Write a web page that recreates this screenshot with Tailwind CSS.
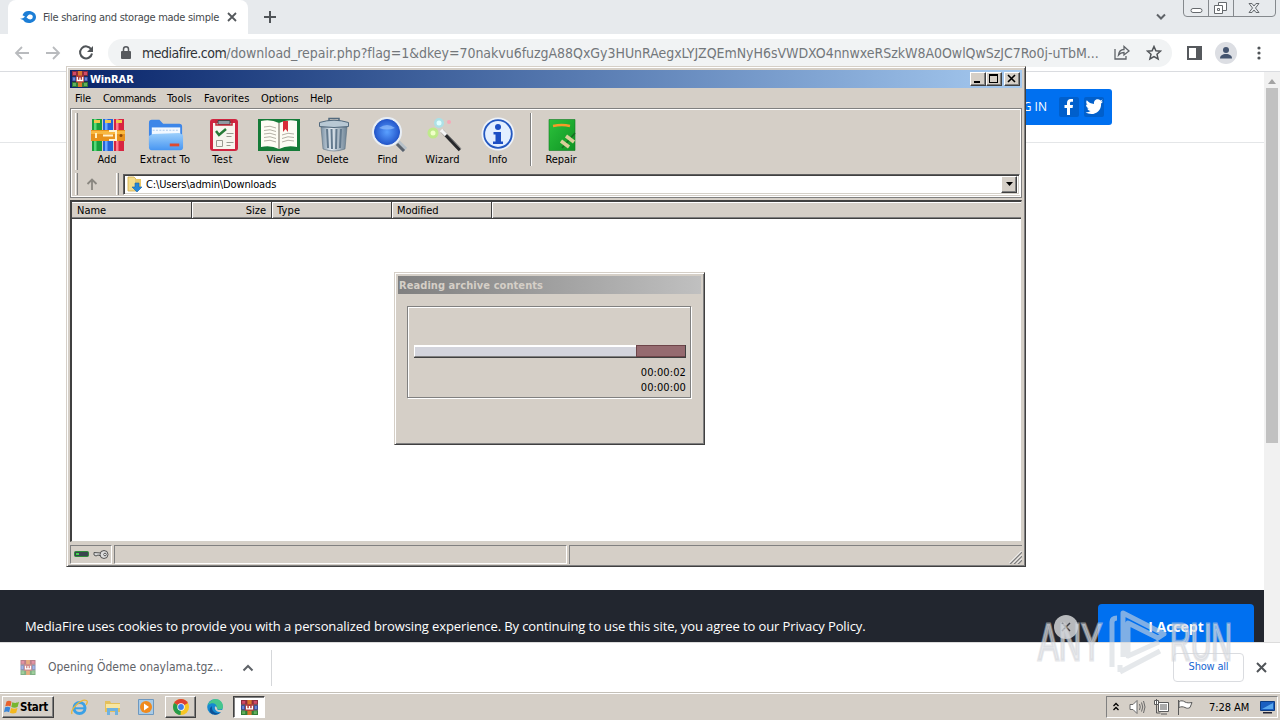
<!DOCTYPE html>
<html lang="en">
<head>
<meta charset="utf-8">
<title>Desktop</title>
<script src="https://cdn.jsdelivr.net/npm/@tailwindcss/browser@4"></script>
</head>
<body class="relative w-[1280px] h-[720px] overflow-hidden bg-white text-black font-['DejaVu_Sans_Condensed','DejaVu_Sans',sans-serif] text-[11px] leading-[14px] whitespace-nowrap">
<svg width="0" height="0" class="absolute">
  <defs>
    <symbol id="rar" viewBox="0 0 16 16">
      <path fill="#8c2c3c" d="M0 0h16v5H0z"/><path fill="#344a9c" d="M0 5.500h16v5H0z"/><path fill="#2f7d35" d="M0 11h16v5H0z"/>
      <path stroke="#222" stroke-width=".6" d="M0 5.200h16M0 10.700h16"/>
      <path fill="#d24a68" d="M1 1h3v3H1zM12 1h3v3h-3z"/><path fill="#6d86d6" d="M1 6.500h2v3H1zM13 6.500h2v3h-2z"/><path fill="#62b05c" d="M1 12h3v3H1zM12 12h3v3h-3z"/>
      <path fill="#d8772c" d="M6 0h4v16H6z"/><path fill="#b23a3a" d="M4 4.500h8v7H4z"/><path fill="none" stroke="#fff" stroke-width="1.300" d="M5.300 6v3.500h5.400V6M8 6.500v3"/>
    </symbol>
    <linearGradient id="fold" x1="0" y1="0" x2="0" y2="1"><stop offset="0" stop-color="#9ccffb"/><stop offset="1" stop-color="#4896f2"/></linearGradient>
    <linearGradient id="metal" x1="0" y1="0" x2="1" y2="0"><stop offset="0" stop-color="#7b91a4"/><stop offset=".4" stop-color="#e2eaf1"/><stop offset="1" stop-color="#6c8294"/></linearGradient>
    <radialGradient id="lens" cx=".5" cy=".5" r=".5"><stop offset="0" stop-color="#5aa0ff"/><stop offset="1" stop-color="#2458cc"/></radialGradient>
    <linearGradient id="grn" x1="0" y1="0" x2="1" y2="1"><stop offset="0" stop-color="#2cc23c"/><stop offset="1" stop-color="#0f9424"/></linearGradient>
  </defs>
</svg>

<div class="flex flex-col h-full">
  <!-- tab strip -->
  <div class="flex h-[34px] bg-[#e7eaed] pl-2">
    <div class="flex items-center w-[240px] h-full bg-white rounded-t-lg pl-3 text-[#45494d]">
      <svg width="16" height="14" viewBox="0 0 16 14"><path fill="#1c7ed6" d="M8.500 1C12.800 1 16 3.500 16 7s-3.200 6-7 6c-3 0-4.800-1.300-5.800-3L0 8.800C3 8.600 4 7.500 5 6.500L2.500 5.300C3.500 2.500 5.500 1 8.500 1z"/><path fill="#fff" d="M6.500 7.500C8 5 9 4.500 10.300 4.500a2.500 2.500 0 010 5C9 9.500 8 8.500 6.500 7.500z"/></svg>
      <span class="ml-[7px] pt-px text-[11px] tracking-[-0.28px]">File sharing and storage made simple</span>
      <svg class="ml-auto mr-[11px]" width="10" height="10" stroke="#54585c" stroke-width="1.8"><path d="M1 1l8 8M9 1l-8 8"/></svg>
    </div>
    <svg class="ml-[15px] mt-[10px]" width="14" height="14" stroke="#505458" stroke-width="2"><path d="M7 1v12M1 7h12"/></svg>
    <svg class="ml-auto mt-[13px]" width="12" height="8" fill="none" stroke="#5f6368" stroke-width="2"><path d="M2 1.500l4 4 4-4"/></svg>
    <svg class="ml-4 mr-1" width="93" height="18" fill="none" stroke="#85898d"><path d="M.5 0v13q0 3.500 3.500 3.500h85q3.500 0 3.500-3.500V0M25.500 0v16M50.500 0v16"/><g stroke="#666a6e"><rect x="8" y="8.500" width="11" height="4" rx="2" fill="#fff"/><path fill="#fff" d="M35.500 2.500h8v8h-8z"/><path fill="#fff" d="M31.500 5.500h8v8h-8z"/><path d="M34.500 8.500h2v2h-2zM66 3.500h3l2 2.500 2-2.500h3l-3.500 4.500 3.500 4.500h-3L71 10l-2 2.500h-3L69.500 8z"/></g></svg>
  </div>
  <!-- address toolbar -->
  <div class="flex items-center h-[38px] bg-white border-b border-[#dadce0] pl-[14px]">
    <svg width="16" height="14" fill="none" stroke="#b9bbbe" stroke-width="1.800"><path d="M15 7H2M8 1L2 7l6 6"/></svg>
    <svg class="ml-4" width="16" height="14" fill="none" stroke="#b9bbbe" stroke-width="1.800"><path d="M0 7h13M7 1l6 6-6 6"/></svg>
    <svg class="ml-4" width="16" height="16" fill="none" stroke="#505458" stroke-width="2"><path d="M13.200 4.200A6 6 0 1014 8.500"/><path fill="#505458" stroke="none" d="M15 1v6H9z"/></svg>
    <div class="flex items-center ml-[14px] w-[1064px] h-7 rounded-full bg-[#f1f3f4] pl-[13px]">
      <svg width="10" height="13" viewBox="0 0 10 13"><path fill="#56595d" d="M1 5h8q1 0 1 1v6q0 1-1 1H1q-1 0-1-1V6q0-1 1-1z"/><path fill="none" stroke="#56595d" stroke-width="1.500" d="M2.500 5.500V3.300a2.500 2.500 0 015 0v2.200"/></svg>
      <span class="ml-[11px] w-[960px] text-[14px] leading-5 text-[#73777b] tracking-[-0.035px]"><span class="text-[#303338] tracking-[-0.5px]">mediafire.com</span>/download_repair.php?flag=1&amp;dkey=70nakvu6fuzgA88QxGy3HUnRAegxLYJZQEmNyH6sVWDXO4nnwxeRSzkW8A0OwlQwSzJC7Ro0j-uTbM...</span>
      <svg class="ml-3" width="16" height="15" fill="none" stroke="#5f6368" stroke-width="1.300"><path d="M1 4v10h11v-3M4.500 10c.5-4 2.500-5.500 5.500-5.500V1.500L15 6l-5 4V7.500c-2.500 0-4 .5-5.500 2.500z"/></svg>
      <svg class="ml-4" width="16" height="16" viewBox="0 0 16 16" fill="none" stroke="#505458" stroke-width="1.500"><path d="M8 1.500l1.900 4.300 4.600.4-3.500 3.100 1.100 4.600L8 11.500l-4.100 2.400L5 9.300 1.500 6.200l4.600-.4z"/></svg>
    </div>
    <svg class="ml-[15px]" width="15" height="14"><path fill="none" stroke="#56595d" stroke-width="2" d="M1 1h13v12H1z"/><path fill="#56595d" d="M9 0h6v14H9z"/></svg>
    <svg class="ml-[13px]" width="22" height="22"><circle cx="11" cy="11" r="11" fill="#dcdee3"/><circle cx="11" cy="8" r="3" fill="#44546f"/><path fill="#44546f" d="M5 16.500c0-3 2.500-4.500 6-4.500s6 1.500 6 4.500z"/></svg>
    <svg class="ml-5" width="4" height="14" fill="#505458"><circle cx="2" cy="2" r="1.600"/><circle cx="2" cy="7" r="1.600"/><circle cx="2" cy="12" r="1.600"/></svg>
  </div>
  <!-- web page -->
  <div class="flex h-[570px]">
    <div class="flex flex-col w-[1264px]">
      <div class="flex justify-end h-[71px] pr-[152px] pt-[17px] border-b border-[#e4e6e8]">
        <div class="flex items-center w-[130px] h-9 rounded-[3px] bg-[#0070f0] text-white pr-2 justify-end font-['Open_Sans',sans-serif]">
          <span class="text-[12px]">LOG IN</span>
          <svg class="ml-3" width="20" height="20"><rect width="20" height="20" rx="2" fill="#005fcc"/><path fill="#fff" d="M8 18v-7H5.500V8H8V6c0-2.800 1.500-4 3.800-4H14v2.800h-1.500c-1.200 0-1.500.6-1.500 1.600V8h3l-.4 3H11v7z"/></svg>
          <svg class="ml-[5px]" width="20" height="20"><rect width="20" height="20" rx="2" fill="#005fcc"/><path fill="#fff" d="M19 4.800l-1.900 1.600c.4 6.600-4.600 10.600-9.600 10.600-2.300 0-4.300-.6-5.900-1.700 1.900.1 3.600-.4 5-1.400-1.700-.2-2.800-1.200-3.300-2.500h1.500C3 10.800 2 9.500 2 7.600l1.600.4C2.200 6.800 1.800 4.900 2.800 3.200c2 2.300 4.300 3.500 7.200 3.700-.5-2.900 1.500-4.700 3.700-4.700 1.100 0 2 .4 2.700 1.200l2.300-.9-1.500 2z"/></svg>
        </div>
      </div>
      <div class="flex items-start mt-auto h-[52px] bg-[#22262f] text-white font-['Open_Sans',sans-serif]">
        <span class="ml-[25px] mt-[27px] text-[13px] leading-[18px] tracking-[-0.11px]">MediaFire uses cookies to provide you with a personalized browsing experience. By continuing to use this site, you agree to our Privacy Policy.</span>
        <svg class="ml-auto mt-[25px]" width="24" height="24"><circle cx="12" cy="12" r="12" fill="#b7b9bc"/><path stroke="#3a3e46" stroke-width="1.500" d="M8 8l8 8M16 8l-8 8"/></svg>
        <div class="flex justify-center ml-5 mr-[10px] mt-[14px] w-[156px] h-[38px] rounded-t bg-[#0070f0] pt-[13px] text-[14px] leading-5 font-bold">I Accept</div>
      </div>
    </div>
    <div class="flex flex-col items-center w-4 bg-[#f1f1f1] pt-[7px]">
      <svg width="8" height="5"><path fill="#a3a3a3" d="M4 0l4 5H0z"/></svg>
      <div class="mt-[4px] w-3 h-[355px] bg-[#c1c1c1]"></div>
    </div>
  </div>
  <!-- downloads bar -->
  <div class="flex items-center h-[50px] bg-white border-t border-[#dcdcdc]">
    <svg class="ml-5 opacity-60" width="16" height="15"><use href="#rar"/></svg>
    <span class="ml-3 w-[176px] pb-[2px] text-[12px] text-[#5f6368]">Opening Ödeme onaylama.tgz...</span>
    <svg class="ml-[18px]" width="12" height="8" fill="none" stroke="#5f6368" stroke-width="2"><path d="M1.500 6.500l4.500-4.500 4.500 4.500"/></svg>
    <div class="ml-[17px] w-px h-9 bg-[#d5d7da]"></div>
    <div class="flex items-center justify-center ml-auto pb-[2px] w-[71px] h-[29px] rounded border border-[#dadce0] text-[#1967d2] tracking-[-0.2px]">Show all</div>
    <svg class="ml-[12px] mr-[13px]" width="11" height="11" stroke="#505458" stroke-width="2"><path d="M1 1l9 9M10 1l-9 9"/></svg>
  </div>
  <!-- taskbar -->
  <div class="flex items-center h-[28px] bg-[#d5cfc7] border-t border-[#c4c0b8] shadow-[inset_0_1px_0_#fff] pt-px pl-[2px]">
    <div class="flex items-center w-[52px] h-[22px] border border-t-white border-l-white border-r-[#404040] border-b-[#404040] shadow-[inset_-1px_-1px_0_#808080] font-bold text-[11.500px] tracking-[-0.3px]">
      <svg class="ml-px" width="16" height="16"><path fill="#e8622c" d="M2.500 2.500c2-1 3.500-.8 5 .2L6.500 7.500C5 6.500 3.500 6.500 1.300 7.300z"/><path fill="#77b62e" d="M8.300 3.200c2 1 4 1.200 6.700-.4l-1.300 5c-2 1.200-4.500 1-6.400.1z"/><path fill="#3a86d8" d="M1.100 8.300c2-.9 3.600-.8 5.200.2L5.100 13.300c-1.500-1-3-1-5.100-.1z"/><path fill="#f4b81e" d="M7.100 9c2 .9 4 1 6.400-.1l-1.300 4.800c-2.300 1.100-4.400 1-6.300 0z"/></svg>
      <span>Start</span>
    </div>
    <svg class="ml-[17px]" width="17" height="17"><circle cx="8.500" cy="9" r="5.500" fill="none" stroke="#3ba1e6" stroke-width="3"/><path fill="none" stroke="#3ba1e6" stroke-width="2" d="M4 9.300h10"/><path fill="none" stroke="#e9b73b" stroke-width="1.300" d="M1 15C-1 11 10-1 15.500 1.500c1.500.8.500 3-.5 4.500"/></svg>
    <svg class="ml-4" width="17" height="16"><path fill="#e4c05c" d="M1 2h5l1 2h9v9H1z"/><path fill="#f8e6a0" d="M2 5h14v4H2z"/><path fill="#6fb2e0" d="M3 9h11v7h-3v-4H6v4H3z"/></svg>
    <svg class="ml-[17px]" width="16" height="16"><path fill="#a9cbe6" stroke="#6d98c0" d="M.5.5h15v15H.5z"/><circle cx="8" cy="8" r="6" fill="#f08a1d"/><path fill="#fff" d="M6 4.500l5 3.500-5 3.500z"/></svg>
    <div class="flex items-center justify-center ml-[11px] w-[31px] h-[22px] border border-t-white border-l-white border-r-[#404040] border-b-[#404040] shadow-[inset_-1px_-1px_0_#808080]">
      <svg width="16" height="16"><circle cx="8" cy="8" r="8" fill="#f7c623"/><path fill="#dd4132" d="M8 8L1.100 4A8 8 0 0114.900 4z"/><path fill="#259b4b" d="M8 8v0l-.5 8A8 8 0 011.100 4z"/><circle cx="8" cy="8" r="3.700" fill="#fff"/><circle cx="8" cy="8" r="2.900" fill="#3d7ee8"/></svg>
    </div>
    <svg class="ml-[11px]" width="16" height="16"><circle cx="8" cy="8" r="7.800" fill="#1589d1"/><path fill="#45c68d" d="M5 1c6-3 12 2 10.800 8-1 2-5 2-5.800 0C10 4 5 3 1 6c.5-2 2-4 4-5z"/><path fill="#0d5298" d="M5 7c-1 6 5 9 9 6-3 4-13 4-11-4z"/><path fill="#d5cfc7" d="M8 7.500c2.500 0 1.500 2 3 3.500h5l-1 2c-4 1-8-2-7-5.500z"/></svg>
    <div class="flex items-center justify-center ml-[10px] w-[32px] h-[22px] bg-white border border-[#404040] border-r-white border-b-white shadow-[inset_1px_1px_0_#808080]">
      <svg width="17" height="15" viewBox="0 0 16 16" preserveAspectRatio="none"><use href="#rar"/></svg>
    </div>
    <div class="flex items-center ml-auto mr-[2px] w-[172px] h-[22px] border border-[#808080] border-r-white border-b-white pl-[6px]">
      <svg width="6" height="10" fill="none" stroke="#000" stroke-width="1.300"><path d="M.5 4L3 1.500 5.500 4M.5 8L3 5.500 5.500 8"/></svg>
      <svg class="ml-[10px]" width="17" height="16" fill="none" stroke="#6a6a6a"><path fill="#fff" d="M1 5.500h3l4-4v13l-4-4H1z"/><path d="M10.500 5q1.500 3 0 6M12.500 3.500q2.500 4.500 0 9M14.500 2q3 6 0 12"/></svg>
      <svg class="ml-[7px]" width="16" height="16" fill="none" stroke="#5a5a5a"><path fill="#fff" d="M5.500 3.500h10v9h-10z"/><path fill="#aaa" stroke="none" d="M7 5h7v6H7z"/><path fill="#fff" d="M1.500 1.500h4v4h-4zM3.500 0v5"/><path d="M3.500 6v8h4M8 15h6"/></svg>
      <svg class="ml-[8px]" width="16" height="16" fill="#fff" stroke="#5a5a5a"><path d="M1.500 1v15M2 2.500c2-1 4-1 6 .5 2 1 4 1 7 .5l-2 5c-2 1-3 1-5 0-2-1-4-1-6 0z"/></svg>
      <span class="ml-[16px] pt-px tracking-[-0.05px]">7:28 AM</span>
      <svg class="ml-auto mr-[2px]" width="15" height="14"><path fill="#1b5fc0" stroke="#0d3c82" d="M.5 1.500h14v9H.5z"/><path fill="#59a7ec" d="M2 9l11-6v6z"/><path fill="#223" d="M3 12h9v1.500H3z"/></svg>
    </div>
  </div>
</div>

<!-- WinRAR window -->
<div class="absolute left-[66px] top-[66px] w-[960px] h-[501px] flex flex-col bg-[#d5cfc7] border border-t-[#d5cfc7] border-l-[#d5cfc7] border-r-[#404040] border-b-[#404040] shadow-[inset_1px_1px_0_#fff,inset_-1px_-1px_0_#808080] p-[3px]">
  <div class="flex items-center h-[18px] shrink-0 bg-linear-to-r from-[#0a246a] to-[#a6caf0] pl-[2px] pr-[2px]">
    <svg width="16" height="16"><use href="#rar"/></svg>
    <span class="ml-[2px] pt-px text-white font-bold tracking-[-0.1px]">WinRAR</span>
    <div class="flex items-center ml-auto">
      <div class="w-4 h-[14px] bg-[#d5cfc7] border border-t-white border-l-white border-r-[#404040] border-b-[#404040] shadow-[inset_-1px_-1px_0_#808080]"><svg width="14" height="12"><path fill="#000" d="M3 8h6v2H3z"/></svg></div>
      <div class="w-4 h-[14px] bg-[#d5cfc7] border border-t-white border-l-white border-r-[#404040] border-b-[#404040] shadow-[inset_-1px_-1px_0_#808080]"><svg width="14" height="12"><path fill="#000" d="M2 1h9v9H2zM3 3v6h7V3z" fill-rule="evenodd"/></svg></div>
      <div class="ml-[2px] w-4 h-[14px] bg-[#d5cfc7] border border-t-white border-l-white border-r-[#404040] border-b-[#404040] shadow-[inset_-1px_-1px_0_#808080]"><svg width="14" height="12"><path stroke="#000" stroke-width="1.600" d="M3 2l7 7M10 2l-7 7"/></svg></div>
    </div>
  </div>
  <div class="flex items-center h-[20px] shrink-0 pl-[5px] pt-px tracking-[-0.1px]">
    <span class="w-[28px]">File</span><span class="w-[64px] tracking-[-0.4px]">Commands</span><span class="w-[37px] tracking-[0.1px]">Tools</span><span class="w-[57px] tracking-[0.1px]">Favorites</span><span class="w-[49px]">Options</span><span>Help</span>
  </div>
  <!-- toolbars -->
  <div class="flex flex-col h-[90px] shrink-0 border border-[#808080] shadow-[inset_1px_1px_0_#fff,inset_-1px_-1px_0_#fff]">
    <div class="flex h-[62px] pt-[4px] pl-[4px] tracking-[-0.1px]">
      <div class="w-[3px] h-[57px] border-l border-l-white border-r border-r-[#808080]"></div>
      <div class="flex flex-col items-center w-[58px] pt-[4px]">
        <svg class="ml-[2px]" width="36" height="36"><path fill="#18a03c" d="M2 2h10v32H2z"/><path fill="#56d978" d="M4 2h2.500v32H4z"/><path fill="#2464d8" d="M13 2h10v32H13z"/><path fill="#6aa8ff" d="M15 2h2.500v32H15z"/><path fill="#d82440" d="M24 2h10v32H24z"/><path fill="#ff7c8c" d="M26 2h2.500v32H26z"/><path fill="#f2c84b" d="M4 3h6v3H4zM15 3h6v3h-6zM26 3h6v3h-6z"/><path fill="#e8921c" d="M1 13h34v11H1z"/><path fill="#f9b840" d="M1 14h34v3H1z"/><path fill="none" stroke="#fff3d0" stroke-width="2" d="M19 14h7v9h-7M13 18.500h10"/><path fill="#fff0c0" d="M5 16h2v5H5z"/><circle cx="31" cy="18.500" r="1.500" fill="#8e4a08"/></svg>
        <span>Add</span>
      </div>
      <div class="flex flex-col items-center w-[58px] pt-[4px]">
        <svg class="ml-[2px]" width="36" height="36" viewBox="0 0 38 36"><path fill="#3d86e8" d="M1 5q0-3 3-3h8l4 4h17q3 0 3 3v20H1z"/><path fill="#f2f8ff" d="M4 10h30v12H4z"/><path stroke="#a8c8ec" stroke-dasharray="2 1.500" d="M5 13h28"/><path fill="url(#fold)" d="M1 19l4-2 28-1 4 2v13q0 3-3 3H4q-3 0-3-3z"/><path fill="#e04a30" d="M23 27h10v3H23z"/></svg>
        <span class="tracking-[0.15px]">Extract To</span>
      </div>
      <div class="flex flex-col items-center w-[57px] pt-[4px]">
        <svg class="ml-[2px]" width="30" height="36"><rect x="1" y="2" width="28" height="32" rx="3" fill="#d02540"/><path fill="#f7f5ee" d="M4 6h22v26H4z"/><path fill="#8f9aa2" stroke="#444" d="M9 3.500h12v4H9z"/><path fill="none" stroke="#c02434" stroke-width="1.500" d="M7 3v5h16V3"/><path fill="none" stroke="#277a37" stroke-width="2.500" d="M7 14l3 4 7-6"/><path fill="none" stroke="#9a9a90" d="M17.500 16.500h7M17.500 19.500h5M17.500 25.500h7M17.500 28.500h4M7.500 23.500h6v6h-6z"/></svg>
        <span class="tracking-[0.3px]">Test</span>
      </div>
      <div class="flex flex-col items-center w-[54px] pt-[4px]">
        <svg class="ml-[2px]" width="42" height="36"><path fill="#157b38" d="M0 2h42v32H0z"/><path fill="#fdfcf4" d="M3 4q10-2 18 2 8-4 18-2v26q-10-2-18 2-8-4-18-2z"/><path stroke="#9a968a" stroke-width="1.500" d="M21 6v26"/><path fill="none" stroke="#b4b1a6" d="M6 10q6-2 12 1M6 13.500q6-2 12 1M6 17q6-2 12 1M6 20.500q6-2 12 1M6 24q6-2 12 1M24 18q6-3 12-1M24 21.500q6-3 12-1M24 25q6-3 12-1"/><path fill="#d82d38" d="M25 4h5v11l-2.500-3-2.500 3z"/></svg>
        <span>View</span>
      </div>
      <div class="flex flex-col items-center w-[55px] pt-[4px]">
        <svg class="ml-[2px]" width="32" height="36"><path fill="url(#metal)" stroke="#5d7080" stroke-width=".6" d="M3 10h26l-2 22q-11 4-22 0z"/><path fill="none" stroke="#637a8e" stroke-width="2" d="M9 12l1 19M13.500 12l.5 20M18.500 12l-.5 20M23 12l-1 19"/><path fill="#b8c8d4" stroke="#52697d" d="M1.500 5.500Q16 1 30.500 5.500v4q-14.500 2-29 0z"/><path fill="none" stroke="#52697d" stroke-width="1.500" d="M11 4V1.500h10V4"/></svg>
        <span>Delete</span>
      </div>
      <div class="flex flex-col items-center w-[55px] pt-[4px]">
        <svg class="ml-[2px]" width="36" height="36"><path stroke="#b6c0c8" stroke-width="6" d="M24 23l10 10"/><path stroke="#5a626c" stroke-width="3" d="M26 27l7 7"/><circle cx="16" cy="15" r="15" fill="#e8eef5"/><circle cx="16" cy="15" r="12.500" fill="url(#lens)" stroke="#2356c8"/><path fill="#9cc8ff" opacity=".6" d="M8 11q8-6 16 0-8 3-16 0z"/></svg>
        <span>Find</span>
      </div>
      <div class="flex flex-col items-center w-[55px] pt-[4px]">
        <svg class="ml-[2px]" width="36" height="36"><circle cx="13" cy="6" r="5" fill="#9be8f4" opacity=".7"/><circle cx="13" cy="6" r="2.500" fill="#e0ffff"/><circle cx="7" cy="16" r="5.500" fill="#b9f07a" opacity=".8"/><circle cx="7" cy="16" r="2.500" fill="#f0ffc8"/><circle cx="23" cy="5" r="2" fill="#f5a8b8"/><path stroke="#28292c" stroke-width="3.500" d="M16 14l18 19"/><path stroke="#f4f4f4" stroke-width="3.500" d="M15 13l5 5"/><path stroke="#888" d="M21 17l14 15"/></svg>
        <span class="tracking-[0.1px]">Wizard</span>
      </div>
      <div class="flex flex-col items-center w-[55px] pt-[4px]">
        <svg class="ml-px" width="34" height="36"><circle cx="17" cy="17" r="16.500" fill="#eef3fa"/><circle cx="17" cy="17" r="13.800" fill="#e3efff" stroke="#2458c0" stroke-width="1.800"/><circle cx="17" cy="10" r="3" fill="#1d4fc4"/><path fill="#1d4fc4" d="M12.500 15H20v9.500h2V27H12v-2.500h2.500v-7h-2z"/></svg>
        <span class="pl-px">Info</span>
      </div>
      <div class="ml-[5px] w-[2px] h-[53px] border-l border-l-[#808080] border-r border-r-white"></div>
      <div class="flex flex-col items-center w-[58px] pt-[4px]">
        <svg class="ml-[2px]" width="28" height="36"><path fill="url(#grn)" stroke="#127a24" stroke-width=".6" d="M1 2.500h26v31H1z"/><path fill="none" stroke="#f59b28" stroke-width="2.500" d="M5 9q9-2 17 0"/><path stroke="#176c24" stroke-width="1.500" d="M14 31l13-15"/><path stroke="#d9cf9a" stroke-width="3.500" d="M13 24l8 6M18 19l8 6"/></svg>
        <span>Repair</span>
      </div>
    </div>
    <div class="flex items-center pl-[4px] pr-[1px] pt-px h-[25px]">
      <div class="w-[3px] h-[22px] border-l border-l-white border-r border-r-[#808080]"></div>
      <svg class="ml-[8px]" width="12" height="12" fill="none" stroke="#8a8780" stroke-width="1.800"><path d="M6 12V2M1.500 6L6 1.500 10.500 6"/></svg>
      <div class="ml-[18px] w-[3px] h-[22px] border-l border-l-white border-r border-r-[#808080]"></div>
      <div class="flex items-center grow ml-[4px] h-[21px] bg-white border border-[#606060] border-r-white border-b-white shadow-[inset_1px_1px_0_#404040,inset_-1px_-1px_0_#d4d0c8] pl-[3px] pr-[2px]">
        <svg width="16" height="16"><path fill="#f3dc8c" stroke="#d0ab48" stroke-width=".8" d="M1 1h6l2 2v12H1z"/><path fill="#e9c765" d="M9 3h5v9H9z"/><path fill="#2687d8" stroke="#1664ac" stroke-width=".6" d="M8 7h4v4h3l-5 5-5-5h3z"/></svg>
        <span class="ml-[3px] pt-[2px] tracking-[-0.13px]">C:\Users\admin\Downloads</span>
        <div class="flex items-center justify-center ml-auto w-4 h-[17px] bg-[#d5cfc7] border border-t-white border-l-white border-r-[#404040] border-b-[#404040] shadow-[inset_-1px_-1px_0_#808080]"><svg width="7" height="4"><path d="M0 0h7L3.500 4z"/></svg></div>
      </div>
    </div>
  </div>
  <!-- file list -->
  <div class="flex flex-col mt-[2px] h-[342px] shrink-0 bg-white border-t-2 border-l-2 border-[#404040] border-r border-b border-r-[#d4d0c8] border-b-[#d4d0c8]">
    <div class="flex h-[17px] shrink-0 bg-[#d5cfc7] border-b border-[#404040] shadow-[inset_0_1px_0_#fff,inset_0_-1px_0_#808080] items-center">
      <span class="w-[120px] h-full border-r border-[#404040] pl-[5px] pt-[2px]">Name</span>
      <span class="w-[80px] h-full border-l border-l-white border-r border-r-[#404040] pr-[5px] pt-[2px] text-right">Size</span>
      <span class="w-[120px] h-full border-l border-l-white border-r border-r-[#404040] pl-[4px] pt-[2px] tracking-[0.2px]">Type</span>
      <span class="w-[100px] h-full border-l border-l-white border-r border-r-[#404040] pl-[4px] pt-[2px] tracking-[-0.1px]">Modified</span>
      <span class="h-full border-l border-white"></span>
    </div>
  </div>
  <!-- status bar -->
  <div class="flex items-stretch mt-[3px] h-[19px] shrink-0 gap-[2px]">
    <div class="flex items-center w-[42px] border border-[#808080] border-r-white border-b-white pl-[3px] gap-[4px] pb-[2px]">
      <svg width="15" height="8"><rect x=".5" y="1.500" width="14" height="5" rx="1" fill="#3a4650" stroke="#2e8c3a"/><path fill="#42d64c" d="M2 3h3v2H2z"/></svg>
      <svg width="16" height="10" fill="#ddd" stroke="#555"><path d="M8 4L1 3.500v2.500l2 1 2-1 3 1z"/><circle cx="11" cy="5.500" r="4"/><circle cx="12" cy="5.500" r="1.300" fill="#fff"/></svg>
    </div>
    <div class="w-[453px] border border-[#808080] border-r-white border-b-white"></div>
    <div class="flex items-end justify-end grow border-t border-l border-[#808080]"><svg width="13" height="13" stroke="#808080" stroke-width="1.500"><path d="M1 13L13 1M5 13l8-8M9 13l4-4"/><path stroke="#fff" stroke-width="1" d="M0 12.500L12.500 0M4 12.500L13 3.500M8 12.500l5-5"/></svg></div>
  </div>
</div>

<!-- progress dialog -->
<div class="absolute left-[394px] top-[272px] w-[311px] h-[173px] flex flex-col bg-[#d5cfc7] border border-t-[#d5cfc7] border-l-[#d5cfc7] border-r-[#404040] border-b-[#404040] shadow-[inset_1px_1px_0_#fff,inset_-1px_-1px_0_#808080] p-[3px]">
  <div class="flex items-center h-[18px] bg-linear-to-r from-[#808080] to-[#c0c0c0] pl-px pt-px text-[#d5cfc7] font-bold tracking-[0.07px]">Reading archive contents</div>
  <div class="flex flex-col mt-[12px] ml-[9px] w-[284px] h-[92px] border border-[#808080] shadow-[inset_1px_1px_0_#fff,1px_1px_0_#fff] pl-[6px] pr-[4px] pt-[38px]">
    <div class="flex w-[272px] h-[13px] border-b border-r border-[#404040]">
      <div class="w-[222px] bg-[#d3d4dc] border-t-2 border-l border-white border-b border-b-[#808080]"></div>
      <div class="grow bg-[#956a6f] border-t border-l border-[#6d4448] border-b border-b-[#6d4448]"></div>
    </div>
    <div class="mt-[7px] text-right leading-[15px] tracking-[0.1px]">00:00:02<br>00:00:00</div>
  </div>
</div>

<!-- watermark -->
<svg class="absolute left-[1030px] top-[600px]" width="220" height="84" fill="#dfe2e6" fill-opacity=".6" stroke="#d0d3d8" stroke-opacity=".55" stroke-width="3">
  <g font-family="Liberation Sans, sans-serif" font-size="51"><text x="8" y="60" textLength="64" lengthAdjust="spacingAndGlyphs">ANY</text><text x="140" y="60" textLength="62" lengthAdjust="spacingAndGlyphs">RUN</text></g>
  <g fill="none" stroke="#d4d8de" stroke-opacity=".6" stroke-width="5" stroke-linejoin="round"><path d="M82 67V22q0-4 5-4M93 57V13l41 21-6 4-30-15v33l31-14M90 72l40-21M90 65v7"/></g>
</svg>
</body>
</html>
